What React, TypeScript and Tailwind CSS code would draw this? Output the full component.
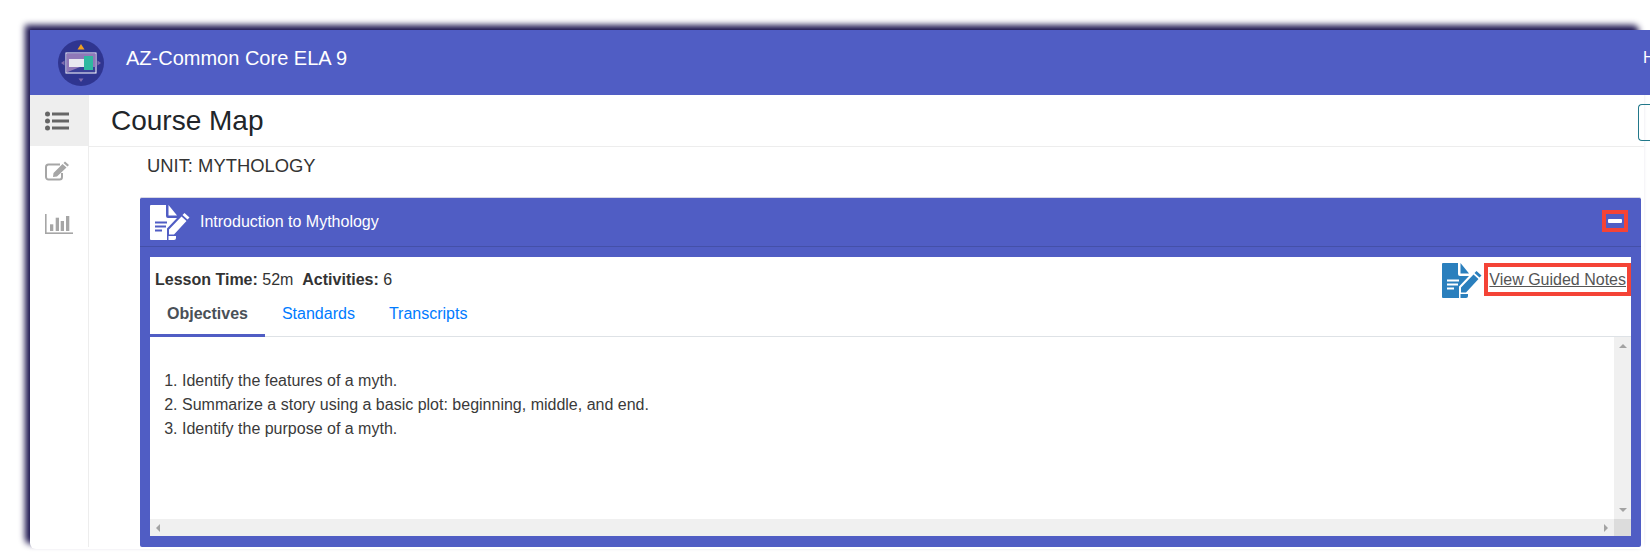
import React from "react";

function NotesIcon({ color, cut, className }: { color: string; cut: string; className: string }) {
  return (
    <svg viewBox="0 0 40 36" className={className}>
      <path fill={color} d="M1 0H16V11a2 2 0 0 0 2 2H27L17 23.5V35H1a1 1 0 0 1-1-1V1a1 1 0 0 1 1-1Z" />
      <path fill={color} d="M18.5 0L27 10.5H18.5Z" />
      <path fill={cut} d="M5 16.5H17V18.5H5ZM5 20.5H16V22.5H5ZM5 24.5H12V26.5H5Z" />
      <path fill={color} d="M34.5 8L39.5 12.5L37.5 14.5L32.5 10ZM31.5 11.5L36.5 16L24 29.5H19V24.5Z" />
      <path fill={color} d="M18.5 31H26V33A2 2 0 0 1 24 35H18.5Z" />
    </svg>
  );
}

function Logo() {
  return (
    <svg viewBox="0 0 46 46" className="w-[46px] h-[46px]">
      <circle cx="23" cy="23" r="23" fill="#2f3590" />
      <path d="M23 4L26.5 9.5H19.5Z" fill="#f0a020" />
      <path d="M23 42L20.5 38.5H25.5Z" fill="#7e6cae" />
      <path d="M3 23L6.5 20.5V25.5Z" fill="#7e6cae" />
      <path d="M43 23L39.5 20.5V25.5Z" fill="#7e6cae" />
      <rect x="8" y="13" width="30" height="20" fill="#3a3f98" stroke="#ffffff" strokeWidth="1" />
      <path d="M8.5 13.5H37.5V27H22L8.5 32.5Z" fill="#8f78b8" />
      <rect x="11" y="19" width="17" height="8" fill="#e8e8f0" />
      <rect x="26" y="16" width="9" height="14" fill="#2fb8a0" />
    </svg>
  );
}

function ListIcon() {
  return (
    <svg viewBox="0 0 24 20" className="w-[24px] h-[20px]" fill="#666666">
      <circle cx="2.5" cy="3" r="2.5" />
      <circle cx="2.5" cy="10" r="2.5" />
      <circle cx="2.5" cy="17" r="2.5" />
      <rect x="7" y="1.5" width="17" height="3" />
      <rect x="7" y="8.5" width="17" height="3" />
      <rect x="7" y="15.5" width="17" height="3" />
    </svg>
  );
}

function EditIcon() {
  return (
    <svg viewBox="0 0 24 20" className="w-[24px] h-[20px]">
      <path d="M15 3.5H3.5a2.5 2.5 0 0 0-2.5 2.5V16a2.5 2.5 0 0 0 2.5 2.5H14.5a2.5 2.5 0 0 0 2.5-2.5V12" fill="none" stroke="#a6a6a6" strokeWidth="2" />
      <path fill="#a6a6a6" d="M20 0.5L24 4L22.5 5.5L18.5 2ZM17.5 3L21.5 6.5L12 15.5L8 16L8.5 12Z" />
    </svg>
  );
}

function ChartIcon() {
  return (
    <svg viewBox="0 0 28 20" className="w-[28px] h-[20px]" fill="#a6a6a6">
      <rect x="0" y="0" width="1.6" height="20" />
      <rect x="0" y="18.4" width="28" height="1.6" />
      <rect x="5" y="10.3" width="3.3" height="6.7" />
      <rect x="10.7" y="3.7" width="3.3" height="13.3" />
      <rect x="15.7" y="7" width="3.3" height="10" />
      <rect x="21" y="2" width="3.3" height="15" />
    </svg>
  );
}

export default function App() {
  const font = { fontFamily: '"Liberation Sans", Arial, sans-serif' };
  return (
    <div className="w-[1650px] h-[554px] overflow-hidden bg-white pt-[30px] pl-[30px]" style={font}>
      <div className="w-[1614px] h-[519px] bg-white rounded-tr-[6px] rounded-bl-[6px] shadow-[-5px_-5px_6px_#1d1650]">
        <header className="h-[65px] w-[1620px] bg-[#505dc4] flex items-center text-white">
          <div className="ml-[28px]"><Logo /></div>
          <span className="ml-[22px] text-[20px] mb-[9px]">AZ-Common Core ELA 9</span>
          <span className="ml-auto text-[16px] w-[7px] overflow-hidden mb-[9px]">H</span>
        </header>
        <div className="flex h-[452px]">
          <aside className="w-[59px] shrink-0 border-r border-[#ededed] flex flex-col items-stretch">
            <div className="h-[51px] bg-[#eeeeee] flex items-center pl-[15px]">
              <ListIcon />
            </div>
            <div className="h-[49px] flex items-center pl-[15px]">
              <EditIcon />
            </div>
            <div className="h-[58px] flex items-center pl-[15px]">
              <ChartIcon />
            </div>
          </aside>
          <main className="flex-1 min-w-0">
            <div className="h-[52px] border-b border-[#ededed] flex items-center pl-[22px]">
              <h1 className="text-[28px] text-[#212529]">Course Map</h1>
              <div className="ml-auto w-[12px] h-[37px] mt-[4px] mr-[-6px] border border-r-0 border-[#22788a] rounded-l-[4px]" />
            </div>
            <div className="pl-[58px] pt-[9px] h-[50px] text-[18.4px] text-[#333333] leading-[20px]">UNIT: MYTHOLOGY</div>
            <section className="ml-[51px] w-[1501px] h-[350px] bg-[#505dc4] border-t border-[#d8d8e4] rounded-[2px] flex flex-col">
              <div className="h-[49px] border-b border-[#4450a8] flex items-center shrink-0 pl-[10px] pr-[13px] text-white">
                <NotesIcon color="#ffffff" cut="#505dc4" className="w-[40px] h-[36px] mt-[2px]" />
                <span className="ml-[10px] text-[16px]">Introduction to Mythology</span>
                <span className="ml-auto mb-[2px] w-[26px] h-[22px] border-[4px] border-[#f44336] flex items-center justify-center">
                  <span className="w-[14px] h-[4px] bg-white rounded-[1px]" />
                </span>
              </div>
              <div className="mt-[10px] mx-[10px] h-[279px] bg-white flex flex-col">
                <div className="h-[80px] shrink-0 border-b border-[#dee2e6]">
                  <div className="h-[44px] flex justify-between items-start">
                    <div className="pl-[5px] pt-[13px] text-[16px] text-[#333333] leading-[20px]">
                      <b>Lesson Time:</b> 52m&nbsp; <b>Activities:</b> 6
                    </div>
                    <div className="flex items-start pt-[6px]">
                      <NotesIcon color="#2a7fbd" cut="#ffffff" className="w-[40px] h-[36px]" />
                      <span className="border-[4px] border-[#f44336] px-[1px] h-[33px] ml-[2px] text-[16px] leading-[26px] text-[#555555] underline">View Guided Notes</span>
                    </div>
                  </div>
                  <div className="flex text-[16px] leading-[20px]">
                    <span className="px-[17px] pt-[3px] h-[36px] font-bold text-[#495057] border-b-[3px] border-[#505dc4]">Objectives</span>
                    <span className="pl-[17px] pr-[17px] pt-[3px] text-[#007bff]">Standards</span>
                    <span className="px-[17px] pt-[3px] text-[#007bff]">Transcripts</span>
                  </div>
                </div>
                <div className="flex-1 min-h-0 grid grid-cols-[1fr_17px] grid-rows-[1fr_17px]">
                  <ol className="pt-[32px] pl-[32px] list-decimal text-[16px] leading-[24px] text-[#3a3a3a]">
                    <li>Identify the features of a myth.</li>
                    <li>Summarize a story using a basic plot: beginning, middle, and end.</li>
                    <li>Identify the purpose of a myth.</li>
                  </ol>
                  <div className="bg-[#f0f0f0] flex flex-col items-center justify-between py-[7px]">
                    <span className="w-0 h-0 border-x-[4px] border-x-transparent border-b-[4px] border-b-[#a3a3a3]" />
                    <span className="w-0 h-0 border-x-[4px] border-x-transparent border-t-[4px] border-t-[#a3a3a3]" />
                  </div>
                  <div className="bg-[#f0f0f0] flex items-center justify-between px-[6px]">
                    <span className="w-0 h-0 border-y-[4px] border-y-transparent border-r-[4px] border-r-[#a3a3a3]" />
                    <span className="w-0 h-0 border-y-[4px] border-y-transparent border-l-[4px] border-l-[#a3a3a3]" />
                  </div>
                  <div className="bg-[#dcdcdc]" />
                </div>
              </div>
            </section>
          </main>
        </div>
      </div>
    </div>
  );
}
